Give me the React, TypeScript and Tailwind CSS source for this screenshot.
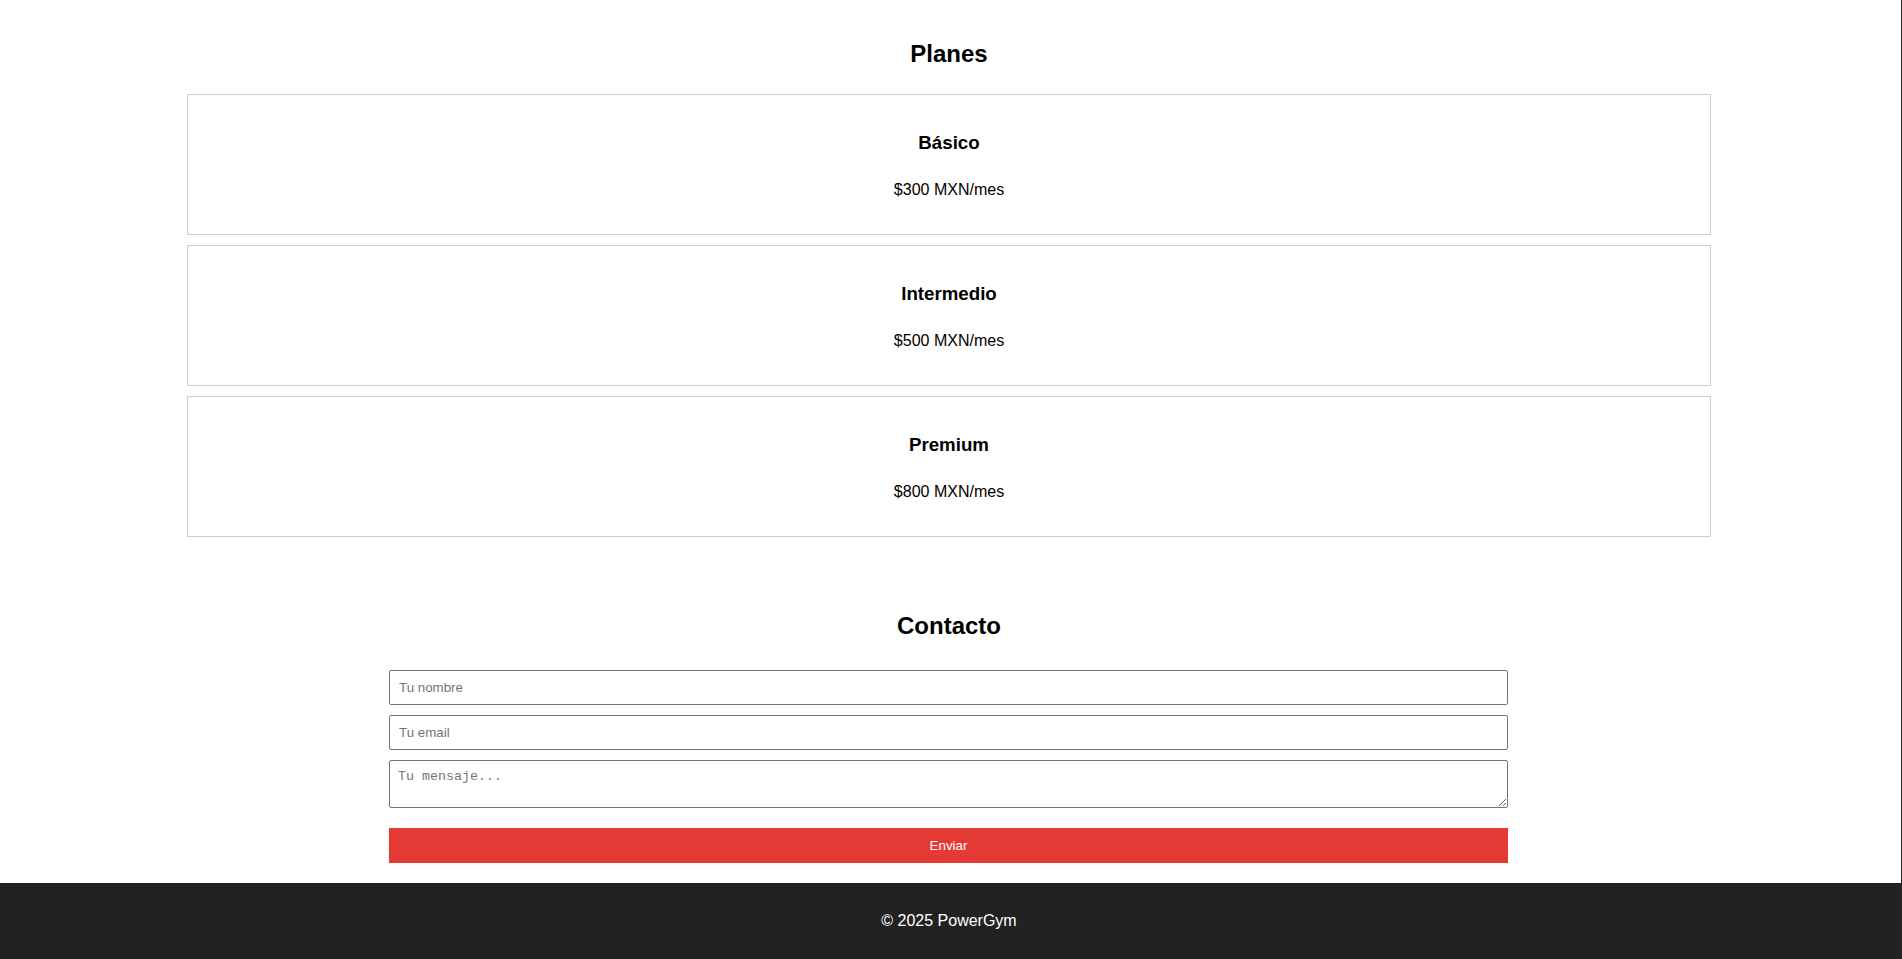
const plans = [
  { name: 'Básico', price: '$300 MXN/mes' },
  { name: 'Intermedio', price: '$500 MXN/mes' },
  { name: 'Premium', price: '$800 MXN/mes' },
]

export default function App() {
  return (
    <div className="min-h-screen bg-white text-black border-r border-[#2b2b2b] font-['Liberation_Sans',Arial,sans-serif]">
      {/* Planes */}
      <section className="pt-[40px] pr-[3px]">
        <h2 className="text-center text-[24px] leading-[28px] font-bold">Planes</h2>
        <div className="mt-[26px] ml-[187px] w-[1524px] flex flex-col gap-[10px]">
          {plans.map(plan => (
            <div key={plan.name} className="h-[141px] border border-[#cccccc] pt-[37px] text-center">
              <h3 className="text-[18.72px] leading-[21.5px] font-bold">{plan.name}</h3>
              <p className="mt-[27px] text-[16px] leading-[18.4px]">{plan.price}</p>
            </div>
          ))}
        </div>
      </section>

      {/* Contacto */}
      <section className="mt-[75px] pr-[3px]">
        <h2 className="text-center text-[24px] leading-[28px] font-bold">Contacto</h2>
        <form className="mt-[30px] ml-[389px] w-[1119px] flex flex-col" onSubmit={e => e.preventDefault()}>
          <input
            type="text"
            placeholder="Tu nombre"
            className="h-[35px] border border-[#767676] rounded-[2px] pl-[9px] text-[13.33px] placeholder:text-[#757575] outline-none"
          />
          <input
            type="email"
            placeholder="Tu email"
            className="mt-[10px] h-[35px] border border-[#767676] rounded-[2px] pl-[9px] text-[13.33px] placeholder:text-[#757575] outline-none"
          />
          <textarea
            placeholder="Tu mensaje..."
            className="mt-[10px] h-[48px] border border-[#767676] rounded-[2px] pl-[8px] pt-[8px] text-[13.33px] leading-[15px] font-['Liberation_Mono',monospace] placeholder:text-[#757575] outline-none"
          />
          <button type="submit" className="mt-[20px] h-[35px] bg-[#e53935] text-white text-[13.33px]">
            Enviar
          </button>
        </form>
      </section>

      <footer className="mt-[20px] h-[76px] bg-[#222222] pt-[29px] pr-[3px] text-center text-white text-[16px] leading-[18.4px]">
        © 2025 PowerGym
      </footer>
    </div>
  )
}
